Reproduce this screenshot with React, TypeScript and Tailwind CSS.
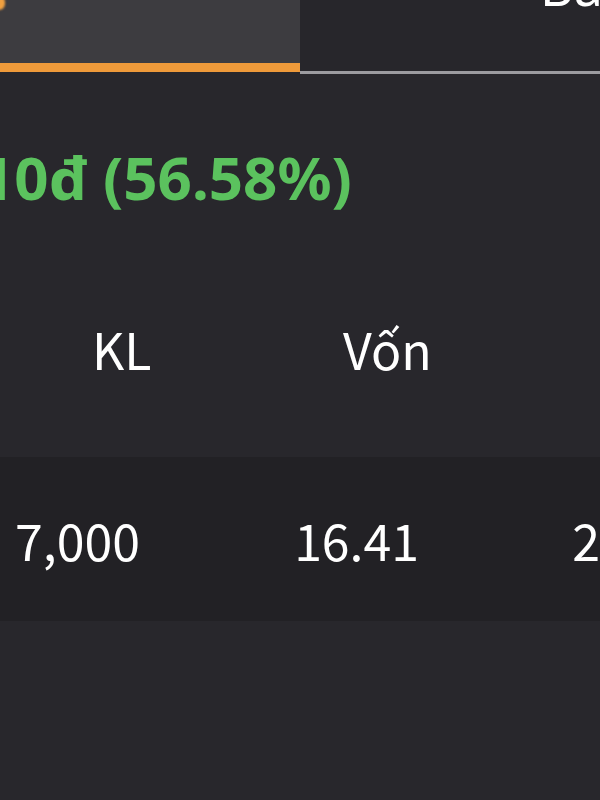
import React from "react";

const FONT = { fontFamily: '"Noto Sans", "Open Sans", sans-serif' };
const TABLE_FONT = { fontFamily: '"Noto Sans CJK SC", "Noto Sans", sans-serif' };

export default function App() {
  return (
    <div
      className="w-[600px] h-[800px] overflow-hidden bg-[#28272c] text-white flex flex-col"
      style={FONT}
    >
      {/* Tabs */}
      <div className="flex h-[74px] shrink-0">
        <div className="relative w-[300px] bg-[#3d3c40] flex flex-col">
          <div className="absolute -left-[7px] -top-[4px] w-[12px] h-[14px] rounded-full bg-[#f0a040] blur-[1px]" />
          <div className="flex-1" />
          <div className="h-[9px] bg-[#ee9a3a]" />
          <div className="h-[2px] bg-[#28272c]" />
        </div>
        <div className="w-[300px] bg-[#27262b] flex flex-col">
          <div className="flex-1 overflow-hidden">
            <div className="-mt-[40px] pl-[240px] text-[52px] leading-[52px] whitespace-nowrap">Bán</div>
          </div>
          <div className="h-[3px] bg-[#9c9ba0]" />
        </div>
      </div>

      {/* Profit */}
      <div className="mt-[65px] h-[76px] overflow-hidden whitespace-nowrap">
        <div className="-ml-[20px] text-[60px] leading-[76px] font-bold text-[#5bc25e]">
          10đ (56.58%)
        </div>
      </div>

      {/* Header */}
      <div
        className="mt-[98px] h-[70px] flex items-center text-[50px] leading-none whitespace-nowrap"
        style={TABLE_FONT}
      >
        <div className="w-[343px] pl-[92px]">KL</div>
        <div>Vốn</div>
      </div>

      {/* Row */}
      <div
        className="mt-[74px] h-[164px] bg-[#222125] flex items-center text-[50px] leading-none whitespace-nowrap"
        style={TABLE_FONT}
      >
        <div className="w-[298px] pl-[15px]">7,000</div>
        <div className="w-[282px]">16.41</div>
        <div>2</div>
      </div>
    </div>
  );
}
